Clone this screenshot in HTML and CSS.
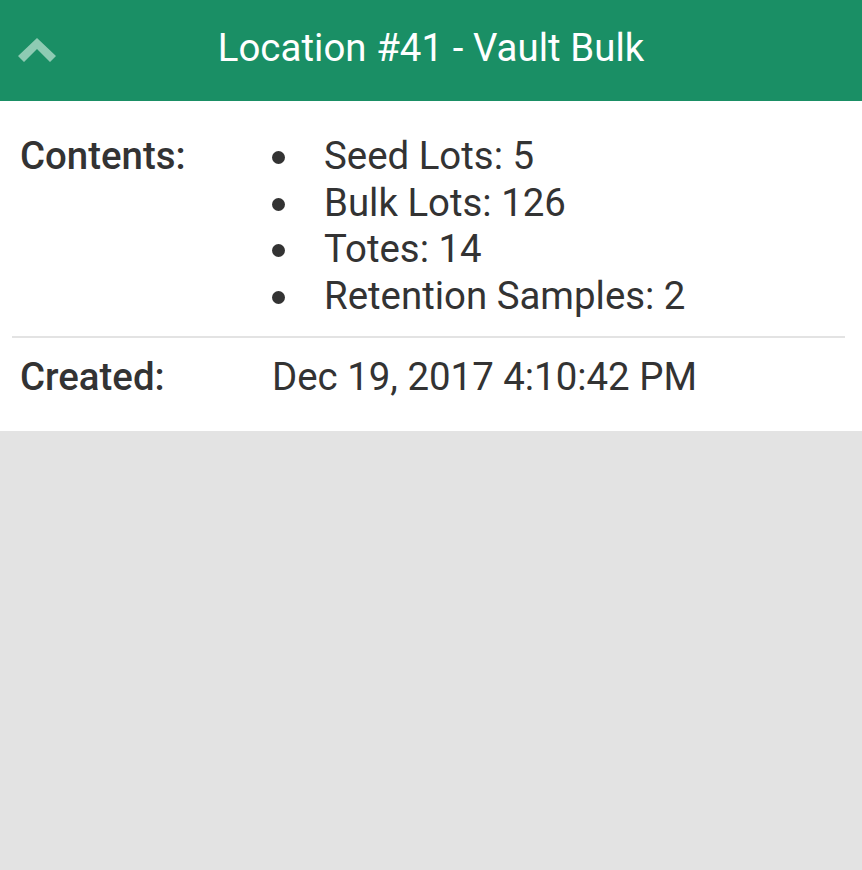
FILE: index.html
```html
<!DOCTYPE html>
<html>
<head>
<meta charset="utf-8">
<link rel="stylesheet" href="styles.css">
</head>
<body>
<header class="topbar">
  <svg class="chev" width="38" height="26" viewBox="0 0 38 26">
    <path d="M0 18 L19 0 L38 18 L32 24 L19 11 L6 24 Z" fill="#8ecbb3"/>
  </svg>
  <h1 class="title">Location #41 - Vault Bulk</h1>
</header>
<section class="card">
  <div class="row">
    <div class="label">Contents:</div>
    <ul class="value list">
      <li>Seed Lots: 5</li>
      <li>Bulk Lots: 126</li>
      <li>Totes: 14</li>
      <li>Retention Samples: 2</li>
    </ul>
  </div>
  <div class="row">
    <div class="label">Created:</div>
    <div class="value">Dec 19, 2017 4:10:42 PM</div>
  </div>
</section>
</body>
</html>
```
FILE: styles.css
```css
html, body {
  margin: 0;
  padding: 0;
  background: #e3e3e3;
  font-family: Roboto, "Liberation Sans", sans-serif;
  color: #333333;
}
.topbar {
  position: relative;
  height: 101px;
  background: #1a8f65;
  display: flex;
  align-items: center;
  justify-content: center;
}
.chev {
  position: absolute;
  left: 18px;
  top: 38px;
}
.title {
  margin: 0;
  font-size: 38.4px;
  font-weight: 400;
  color: #ffffff;
  line-height: 1;
  padding-bottom: 4px;
  letter-spacing: 0.05px;
}
.card {
  background: #ffffff;
  padding: 16px 17px 15px 12px;
  box-shadow: 0 2px 5px rgba(0,0,0,0.26);
}
.row {
  display: flex;
  padding: 16px 0 16px 8px;
  font-size: 38.4px;
  line-height: 46.67px;
}
.row + .row {
  border-top: 2px solid #e3e3e3;
}
.label {
  width: 252px;
  font-weight: 500;
  flex-shrink: 0;
}
.value {
  font-weight: 400;
}
.list {
  margin: 0;
  padding: 0;
  list-style: none;
}
.list li {
  display: flex;
  align-items: center;
}
.list li::before {
  content: "";
  width: 13px;
  height: 13px;
  border-radius: 50%;
  background: #333333;
  margin-right: 39px;
  flex-shrink: 0;
  position: relative;
  top: 1px;
}
```
